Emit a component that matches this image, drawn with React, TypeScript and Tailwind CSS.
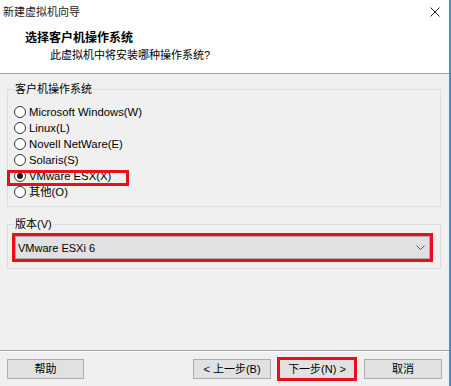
import { ReactNode } from 'react'

const font = "font-['Liberation_Sans','Noto_Sans_CJK_SC',sans-serif]"

function Radio({ label, checked }: { label: string; checked?: boolean }) {
  return (
    <div className="flex h-[16px] items-center gap-[3px] pl-[6px]">
      <span className="flex h-[12px] w-[12px] items-center justify-center rounded-full border border-[#333333] bg-white">
        {checked && <span className="h-[6px] w-[6px] rounded-full bg-[#1a1a1a]" />}
      </span>
      <span>{label}</span>
    </div>
  )
}

function Button({ children, className = '' }: { children: ReactNode; className?: string }) {
  return (
    <button
      className={`flex h-[20px] items-center justify-center border border-[#adadad] bg-[#e1e1e1] text-[11px] text-black ${className}`}
    >
      {children}
    </button>
  )
}

export default function App() {
  const systems = [
    'Microsoft Windows(W)',
    'Linux(L)',
    'Novell NetWare(E)',
    'Solaris(S)',
  ]

  return (
    <div
      className={`flex h-[386px] w-[451px] flex-col overflow-hidden border-r-2 border-[#3f8fd6] bg-[#f0f0f0] text-[11px] leading-[16px] text-black ${font}`}
    >
      {/* HEADER */}
      <div className="flex h-[74px] flex-col border-b border-[#a0a0a0] bg-white">
        <div className="flex h-[24px] items-center justify-between pl-[3px] pr-[9px]">
          <span className="text-[#1a1a1a]">新建虚拟机向导</span>
          <svg width="10" height="10" viewBox="0 0 10 10" className="mt-[-1px]">
            <path d="M0.5 0.5 L9.5 9.5 M9.5 0.5 L0.5 9.5" stroke="#222" strokeWidth="1" />
          </svg>
        </div>
        <div className="mt-[6px] pl-[25px] text-[12px] font-bold">选择客户机操作系统</div>
        <div className="mt-[1px] pl-[50px]">此虚拟机中将安装哪种操作系统?</div>
      </div>

      {/* BODY */}
      <div className="flex flex-1 flex-col pl-[7px] pr-[8px]">
        <fieldset className="mt-[7px] border border-[#dcdcdc] pb-[6px]">
          <legend className="ml-[6px] px-px">客户机操作系统</legend>
          <div className="mt-[7px] flex flex-col text-[11.3px]">
            {systems.map(s => (
              <Radio key={s} label={s} />
            ))}
            <div className="relative">
              <Radio label="VMware ESX(X)" checked />
              <div className="absolute left-[-1px] top-[2px] z-10 h-[16px] w-[122px] border-[3px] border-[#e8101a]" />
            </div>
            <Radio label="其他(O)" />
          </div>
        </fieldset>

        <fieldset className="mt-[9px] border border-[#dcdcdc] pb-[6px]">
          <legend className="ml-[6px] px-px">版本(V)</legend>
          <div className="ml-[4px] mr-[7px] mt-px border-[3px] border-[#e8101a]">
            <div className="flex h-[23px] items-center justify-between border border-[#adadad] bg-[#e1e1e1] pl-[2px] pr-[4px]">
              <span>VMware ESXi 6</span>
              <svg width="9" height="5" viewBox="0 0 9 5">
                <path d="M0.5 0.5 L4.5 4.5 L8.5 0.5" stroke="#555" strokeWidth="1" fill="none" />
              </svg>
            </div>
          </div>
        </fieldset>
      </div>

      {/* FOOTER */}
      <div className="border-t border-[#a0a0a0]">
        <div className="border-t border-white" />
        <div className="flex h-[34px] items-start pl-[7px] pr-[7px] pt-[7px]">
          <Button className="w-[77px]">帮助</Button>
          <div className="flex-1" />
          <Button className="w-[78px]">&lt; 上一步(B)</Button>
          <div className="relative ml-[8px]">
            <Button className="w-[76px]">下一步(N) &gt;</Button>
            <div className="absolute inset-[-2px] border-[3px] border-[#e8101a]" />
          </div>
          <Button className="ml-[9px] w-[78px]">取消</Button>
        </div>
      </div>
    </div>
  )
}
